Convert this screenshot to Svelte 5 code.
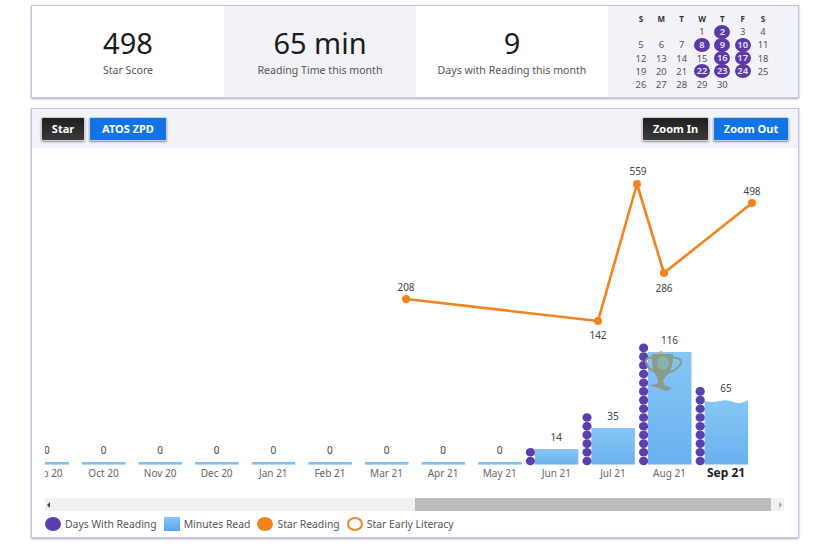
<script>
    // top stats
    let stats = [
        { value: '498', label: 'Star Score' },
        { value: '65 min', label: 'Reading Time this month' },
        { value: '9', label: 'Days with Reading this month' }
    ];

    // calendar, blanks first
    let weekdays = ['S', 'M', 'T', 'W', 'T', 'F', 'S'];
    let readDays = [2, 8, 9, 10, 16, 17, 22, 23, 24];
    let days = [null, null, null];
    for (let d = 1; d <= 30; d++) days.push(d);

    // chart columns
    let step = 56.6;
    let months = [
        { name: 'Sep 20', min: 0, dots: 0 },
        { name: 'Oct 20', min: 0, dots: 0 },
        { name: 'Nov 20', min: 0, dots: 0 },
        { name: 'Dec 20', min: 0, dots: 0 },
        { name: 'Jan 21', min: 0, dots: 0 },
        { name: 'Feb 21', min: 0, dots: 0 },
        { name: 'Mar 21', min: 0, dots: 0 },
        { name: 'Apr 21', min: 0, dots: 0 },
        { name: 'May 21', min: 0, dots: 0 },
        { name: 'Jun 21', min: 14, dots: 2, top: 301 },
        { name: 'Jul 21', min: 35, dots: 6, top: 280 },
        { name: 'Aug 21', min: 116, dots: 14, top: 204 },
        { name: 'Sep 21', min: 65, dots: 9, top: 252, now: true }
    ];
    // svg starts at x=32 y=148 in the page
    let barX = (i) => 50 + (i - 1) * step;
    let midX = (i) => barX(i) + 21.5;

    let line = [
        { x: 374, y: 151, v: 208, lx: 374, ly: 143 },
        { x: 566, y: 173, v: 142, lx: 566, ly: 191 },
        { x: 605, y: 36, v: 559, lx: 606, ly: 27 },
        { x: 632, y: 125, v: 286, lx: 632, ly: 144 },
        { x: 720, y: 55, v: 498, lx: 720, ly: 47 }
    ];
    let linePts = line.map((p) => p.x + ',' + p.y).join(' ');
</script>

<div class="page">
    <section class="card stats">
        {#each stats as s}
            <div class="stat">
                <div class="value">{s.value}</div>
                <div class="label">{s.label}</div>
            </div>
        {/each}
        <div class="stat calendar">
            <div class="cal-grid">
                {#each weekdays as w}
                    <div class="wd">{w}</div>
                {/each}
                {#each days as d}
                    <div class="day"><span class:read={readDays.includes(d)}>{d ?? ''}</span></div>
                {/each}
            </div>
        </div>
    </section>

    <section class="card chart">
        <div class="toolbar">
            <div class="btns">
                <button class="dark">Star</button>
                <button class="blue">ATOS ZPD</button>
            </div>
            <div class="btns">
                <button class="dark zoom">Zoom In</button>
                <button class="blue zoom">Zoom Out</button>
            </div>
        </div>

        <svg class="plot" width="766" height="347" viewBox="0 0 766 347">
            <defs>
                <linearGradient id="bar" x1="0" y1="0" x2="0" y2="1">
                    <stop offset="0" stop-color="#86c6f6" />
                    <stop offset="1" stop-color="#69b2ee" />
                </linearGradient>
                <clipPath id="plotclip"><rect x="13" y="0" width="740" height="347" /></clipPath>
            </defs>
            <g clip-path="url(#plotclip)">
                {#each months as m, i}
                    {#if m.min === 0}
                        <rect x={barX(i)} y="314" width="43.5" height="2.6" fill="#7fc1f3" />
                        <text class="num" x={midX(i)} y="306" text-anchor="middle">0</text>
                    {:else if m.now}
                        <path d="M{barX(i)} 253 q8 2 15 0 t14 1 t14.5 -2 V316.5 H{barX(i)} Z" fill="url(#bar)" />
                        <text class="num" x={midX(i)} y={m.top - 8} text-anchor="middle">{m.min}</text>
                    {:else}
                        <rect x={barX(i)} y={m.top} width="43.5" height={316.5 - m.top} fill="url(#bar)" />
                        <text class="num" x={midX(i)} y={m.top - 8} text-anchor="middle">{m.min}</text>
                    {/if}
                    <text class="month" class:now={m.now} x={midX(i)} y="329" text-anchor="middle">{m.name}</text>
                    {#each Array(m.dots) as _, n}
                        <ellipse cx={barX(i) - 4.4} cy={313 - n * 8.7} rx="4.6" ry="4.3" fill="#5b3fb0" />
                    {/each}
                {/each}
            </g>

            <!-- trophy on the best month -->
            <g class="trophy">
                <circle cx="629" cy="205" r="2" fill="#e0b050" />
                <path d="M622 210 q-9 -2 -8 5 q2 7 12 10" fill="none" stroke="#8a9a86" stroke-width="2" />
                <path d="M638 210 q12 -1 11 5 q-2 6 -13 10" fill="none" stroke="#8a9a86" stroke-width="2" />
                <path d="M620 206 H641 Q642 222 633 229 L631 233 L626 233 L625 229 Q619 222 620 206 Z" fill="#8a9a86" />
                <ellipse cx="631" cy="215" rx="6" ry="7" fill="#84b5a2" />
                <path d="M627 232 L631 232 L632 237 L640 240 L635 243 L617 237 L625 236 Z" fill="#8a9a86" />
            </g>

            <polyline points={linePts} fill="none" stroke="#f4821f" stroke-width="2.6" stroke-linejoin="round" />
            {#each line as p}
                <circle cx={p.x} cy={p.y} r="4" fill="#f4821f" />
                <text class="num" x={p.lx} y={p.ly} text-anchor="middle">{p.v}</text>
            {/each}
        </svg>

        <div class="scrollbar">
            <span class="arrow left"></span>
            <div class="track"><div class="thumb"></div></div>
            <span class="arrow right"></span>
        </div>

        <div class="legend">
            <div class="item"><span class="swatch dot purple"></span>Days With Reading</div>
            <div class="item"><span class="swatch square"></span>Minutes Read</div>
            <div class="item"><span class="swatch dot orange"></span>Star Reading</div>
            <div class="item"><span class="swatch dot ring"></span>Star Early Literacy</div>
        </div>
    </section>
</div>

<style>
    :global(body) {
        background: #fff;
    }
    .page {
        width: 831px;
        height: 544px;
        box-sizing: border-box;
        padding: 5px 31px 0;
        font-family: "Noto Sans", "Open Sans", sans-serif;
        color: #222;
    }
    .card {
        box-sizing: border-box;
        width: 768px;
        background: #fff;
        border: 1px solid #c3c6dc;
        box-shadow: 0 1px 2px #a9adc9;
    }
    .stats {
        display: grid;
        grid-template-columns: 192px 192px 192px 190px;
        height: 93px;
    }
    .stat {
        display: flex;
        flex-direction: column;
        align-items: center;
        justify-content: center;
    }
    .stat:nth-child(even) {
        background: #f2f3f8;
    }
    .value {
        font-size: 29px;
        line-height: 34px;
        color: #1c1c1c;
    }
    .label {
        font-size: 10.6px;
        line-height: 15px;
        color: #555;
        margin-top: 3px;
    }
    .cal-grid {
        display: grid;
        grid-template-columns: repeat(7, 20.35px);
        grid-auto-rows: 13.3px;
        margin-left: -2px;
        font-size: 9.4px;
        color: #555;
        text-align: center;
    }
    .wd {
        font-weight: 700;
        font-size: 8px;
        line-height: 13px;
        color: #333;
    }
    .day {
        display: flex;
        align-items: center;
        justify-content: center;
        line-height: 13px;
    }
    .read {
        width: 16px;
        height: 14px;
        line-height: 14px;
        border-radius: 50%;
        background: #5b3aa8;
        color: #e8e4f5;
        font-weight: 600;
        flex: none;
    }
    .chart {
        height: 430px;
        margin-top: 10px;
    }
    .toolbar {
        display: flex;
        justify-content: space-between;
        align-items: center;
        height: 39px;
        padding: 0 9px;
        background: #f2f3f8;
    }
    .btns {
        display: flex;
        gap: 4px;
    }
    button {
        height: 24px;
        padding: 0;
        font-family: inherit;
        font-size: 11px;
        font-weight: 700;
        color: #fff;
        border: 1px solid #c9ccd6;
        border-radius: 2px;
        box-shadow: 0 1px 2px #8a8d9c;
    }
    .dark {
        width: 44px;
        background: linear-gradient(#1f1f1f, #3a3a3a);
    }
    .blue {
        width: 78px;
        background: #1273e6;
    }
    .dark.zoom {
        width: 67px;
    }
    .blue.zoom {
        width: 76px;
    }
    .plot {
        display: block;
    }
    .num {
        font-size: 10px;
        fill: #444;
    }
    .month {
        font-size: 10px;
        fill: #666;
    }
    .month.now {
        font-size: 12px;
        font-weight: 700;
        fill: #222;
    }
    .trophy {
        opacity: 0.95;
    }
    .scrollbar {
        display: flex;
        align-items: center;
        height: 13px;
        margin: 3px 14px 0 13px;
        background: #f1f1f1;
    }
    .arrow {
        flex: none;
        width: 13px;
        height: 13px;
        position: relative;
    }
    .arrow::after {
        content: '';
        position: absolute;
        top: 4px;
        border: 3px solid transparent;
    }
    .arrow.left::after {
        left: 2px;
        border-right-color: #444;
        border-left-width: 0;
    }
    .arrow.right::after {
        right: 2px;
        border-left-color: #aaa;
        border-right-width: 0;
    }
    .track {
        flex: 1;
        height: 13px;
        display: flex;
        justify-content: flex-end;
    }
    .thumb {
        width: 356px;
        background: #bcbcbc;
    }
    .legend {
        display: flex;
        align-items: center;
        height: 17px;
        margin: 4px 0 0 13px;
        gap: 7px;
        font-size: 10.4px;
        color: #555;
    }
    .item {
        display: flex;
        align-items: center;
        gap: 4px;
        white-space: nowrap;
    }
    .swatch {
        flex: none;
        box-sizing: border-box;
        display: block;
    }
    .dot {
        width: 16px;
        height: 14px;
        border-radius: 50%;
    }
    .purple {
        background: #5b3fb0;
    }
    .orange {
        background: #f4821f;
    }
    .ring {
        border: 2px solid #f4821f;
        background: #fff;
    }
    .square {
        width: 16px;
        height: 14px;
        background: linear-gradient(#86c6f6, #5aa6e8);
    }
</style>
